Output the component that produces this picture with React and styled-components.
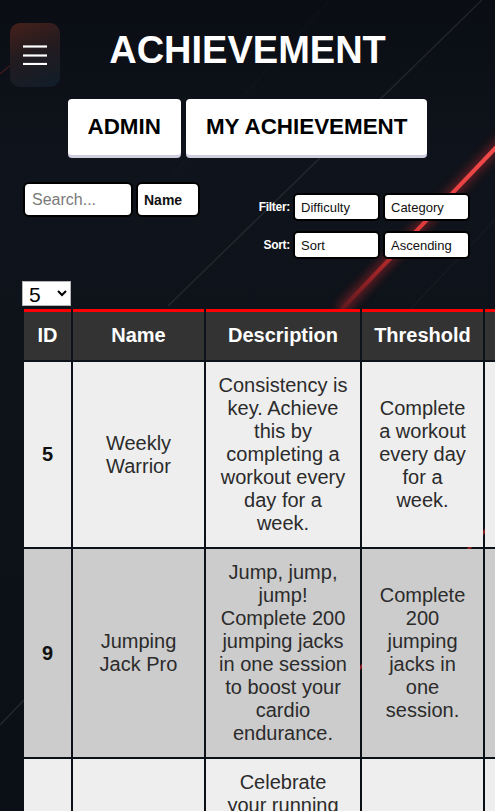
import React from 'react';
import styled, { createGlobalStyle } from 'styled-components';

const GlobalStyle = createGlobalStyle`
  html, body {
    margin: 0;
    padding: 0;
    background: #0b0f16;
    overflow-x: hidden;
    font-family: "Liberation Sans", Arial, sans-serif;
  }
`;

const Page = styled.div`
  position: relative;
  min-height: 100vh;
  overflow: hidden;
  padding-bottom: 40px;
`;

const Backdrop = styled.svg`
  position: absolute;
  top: 0;
  left: 0;
  width: 100%;
  height: 811px;
  z-index: 0;
  pointer-events: none;
`;

const Content = styled.div`
  position: relative;
  z-index: 1;
`;

const MenuToggle = styled.button`
  position: absolute;
  top: 23px;
  left: 10px;
  width: 50px;
  height: 64px;
  border: none;
  border-radius: 10px;
  background: linear-gradient(160deg, #45201a 0%, #231b1f 45%, #101d2a 100%);
  display: flex;
  align-items: center;
  justify-content: center;
  padding: 0;
  cursor: pointer;
  z-index: 2;
`;

const Title = styled.h1`
  margin: 29px 0 0;
  text-align: center;
  color: #ffffff;
  font-size: 38px;
  font-weight: 700;
`;

const TabRow = styled.div`
  display: flex;
  justify-content: center;
  gap: 5px;
  margin-top: 27px;
`;

const TabButton = styled.button`
  height: 56px;
  padding: 0 20px;
  background: #ffffff;
  color: #000000;
  border: none;
  border-radius: 4px;
  box-shadow: 0 3px 0 #cfcde0;
  font-family: "Liberation Sans", Arial, sans-serif;
  font-size: 22.4px;
  font-weight: 700;
  cursor: pointer;
`;

const Controls = styled.div`
  display: flex;
  justify-content: space-between;
  align-items: flex-start;
  padding: 0 25px 0 23px;
  margin-top: 27px;
`;

const SearchGroup = styled.div`
  display: flex;
  gap: 3px;
`;

const SearchInput = styled.input`
  box-sizing: border-box;
  width: 110px;
  height: 35px;
  border: 2px solid #000;
  border-radius: 6px;
  padding: 0 7px;
  font-family: "Liberation Sans", Arial, sans-serif;
  font-size: 16px;
  color: #222;
  background: #fff;
  outline: none;

  &::placeholder {
    color: #7a7a7a;
  }
`;

const FieldButton = styled.button`
  box-sizing: border-box;
  width: 64px;
  height: 35px;
  border: 2px solid #000;
  border-radius: 6px;
  background: #fff;
  padding: 0 0 0 6px;
  text-align: left;
  font-family: "Liberation Sans", Arial, sans-serif;
  font-size: 14px;
  font-weight: 700;
  color: #111;
`;

const FilterGroup = styled.div`
  display: grid;
  grid-template-columns: auto 87px 87px;
  column-gap: 3px;
  row-gap: 10px;
  align-items: center;
  margin-top: 11px;
`;

const FilterLabel = styled.span`
  color: #ffffff;
  font-size: 12px;
  font-weight: 700;
  text-align: right;
  letter-spacing: -0.3px;
`;

const FilterBox = styled.button`
  box-sizing: border-box;
  height: 28px;
  border: 2px solid #000;
  border-radius: 5px;
  background: #fff;
  padding: 0 0 0 6px;
  text-align: left;
  font-family: "Liberation Sans", Arial, sans-serif;
  font-size: 13px;
  color: #111;
`;

const PageSizeRow = styled.div`
  padding-left: 22px;
  margin-top: 22px;
  height: 26px;
`;

const PageSizeSelect = styled.select`
  width: 49px;
  height: 25px;
  font-family: "Liberation Sans", Arial, sans-serif;
  font-size: 21px;
  border: 1px solid #b5b5b5;
  border-radius: 0;
  background: #fff;
  color: #000;
  padding: 0 2px;
`;

const Table = styled.table`
  margin-left: 22px;
  border-collapse: separate;
  border-spacing: 2px;
  table-layout: fixed;
`;

const HeadCell = styled.th`
  box-sizing: border-box;
  width: ${(p) => p.$w}px;
  background: #333333;
  color: #ffffff;
  border-top: 3px solid #ff0000;
  padding: 12px 4px 13px;
  font-size: 20px;
  font-weight: 700;
  text-align: center;
`;

const Row = styled.tr`
  background: ${(p) => (p.$alt ? '#cccccc' : '#eeeeee')};
`;

const Cell = styled.td`
  box-sizing: border-box;
  padding: 12px;
  font-size: 20px;
  color: ${(p) => (p.$bold ? '#111111' : '#2b2b2b')};
  text-align: center;
  vertical-align: middle;
  font-weight: ${(p) => (p.$bold ? 700 : 400)};
`;

const columns = [
  { key: 'id', label: 'ID', w: 47 },
  { key: 'name', label: 'Name', w: 131 },
  { key: 'description', label: 'Description', w: 154 },
  { key: 'threshold', label: 'Threshold', w: 121 },
  { key: 'difficulty', label: 'Difficulty', w: 120 },
  { key: 'category', label: 'Category', w: 130 },
  { key: 'points', label: 'Points', w: 100 },
];

const tableWidth = columns.reduce((sum, c) => sum + c.w, 0) + (columns.length + 1) * 2;

const achievements = [
  {
    id: 5,
    name: 'Weekly Warrior',
    description: 'Consistency is key. Achieve this by completing a workout every day for a week.',
    threshold: 'Complete a workout every day for a week.',
    difficulty: 'Medium',
    category: 'Consistency',
    points: 50,
  },
  {
    id: 9,
    name: 'Jumping Jack Pro',
    description: 'Jump, jump, jump! Complete 200 jumping jacks in one session to boost your cardio endurance.',
    threshold: 'Complete 200 jumping jacks in one session.',
    difficulty: 'Easy',
    category: 'Cardio',
    points: 30,
  },
  {
    id: 12,
    name: 'Marathon Master',
    description: 'Celebrate your running journey by completing a full marathon distance in total runs.',
    threshold: 'Run a total of 42 km.',
    difficulty: 'Hard',
    category: 'Running',
    points: 100,
  },
  {
    id: 14,
    name: 'Early Bird',
    description: 'Start your day right by working out before 7 AM five times.',
    threshold: 'Work out before 7 AM five times.',
    difficulty: 'Medium',
    category: 'Habits',
    points: 40,
  },
];

const MenuIcon = () => (
  <svg width="24" height="20" viewBox="0 0 24 20">
    <g stroke="#ffffff" strokeWidth="2.2">
      <line x1="0" y1="1.5" x2="24" y2="1.5" />
      <line x1="0" y1="10.5" x2="24" y2="10.5" />
      <line x1="0" y1="19" x2="24" y2="19" />
    </g>
  </svg>
);

const BackgroundArt = () => (
  <Backdrop viewBox="0 0 495 811" preserveAspectRatio="none">
    <defs>
      <linearGradient id="bg" x1="0" y1="0" x2="0" y2="1">
        <stop offset="0" stopColor="#0a0d14" />
        <stop offset="0.2" stopColor="#0f131b" />
        <stop offset="1" stopColor="#0b0f16" />
      </linearGradient>
      <linearGradient id="streak" x1="505" y1="138" x2="340" y2="311" gradientUnits="userSpaceOnUse">
        <stop offset="0" stopColor="#ff5050" stopOpacity="0.95" />
        <stop offset="0.55" stopColor="#ff4040" stopOpacity="0.8" />
        <stop offset="1" stopColor="#ff2020" stopOpacity="0.1" />
      </linearGradient>
      <filter id="glow" x="-20%" y="-20%" width="140%" height="140%">
        <feGaussianBlur stdDeviation="4" />
      </filter>
    </defs>
    <rect width="495" height="811" fill="url(#bg)" />
    <line x1="482" y1="0" x2="168" y2="306" stroke="rgba(255,255,255,0.09)" strokeWidth="1.5" />
    <line x1="330" y1="0" x2="150" y2="200" stroke="rgba(255,255,255,0.03)" strokeWidth="1" />
    <line x1="495" y1="220" x2="400" y2="320" stroke="rgba(255,255,255,0.05)" strokeWidth="1" />
    <line x1="0" y1="74" x2="24" y2="54" stroke="rgba(200,60,60,0.25)" strokeWidth="1.5" />
    <line x1="0" y1="725" x2="24" y2="700" stroke="rgba(255,255,255,0.1)" strokeWidth="1.5" />
    <line x1="505" y1="138" x2="340" y2="311" stroke="#ff3030" strokeWidth="12" opacity="0.3" filter="url(#glow)" />
    <line x1="505" y1="138" x2="340" y2="311" stroke="url(#streak)" strokeWidth="4" />
    <line x1="495" y1="520" x2="340" y2="690" stroke="#ff2a2a" strokeWidth="3" opacity="0.5" />
  </Backdrop>
);

const App = () => {
  return (
    <Page>
      <GlobalStyle />
      <BackgroundArt />
      <MenuToggle aria-label="Menu">
        <MenuIcon />
      </MenuToggle>
      <Content>
        <Title>ACHIEVEMENT</Title>
        <TabRow>
          <TabButton>ADMIN</TabButton>
          <TabButton>MY ACHIEVEMENT</TabButton>
        </TabRow>

        <Controls>
          <SearchGroup>
            <SearchInput placeholder="Search..." />
            <FieldButton>Name</FieldButton>
          </SearchGroup>
          <FilterGroup>
            <FilterLabel>Filter:</FilterLabel>
            <FilterBox>Difficulty</FilterBox>
            <FilterBox>Category</FilterBox>
            <FilterLabel>Sort:</FilterLabel>
            <FilterBox>Sort</FilterBox>
            <FilterBox>Ascending</FilterBox>
          </FilterGroup>
        </Controls>

        <PageSizeRow>
          <PageSizeSelect defaultValue="5">
            <option value="5">5</option>
            <option value="10">10</option>
            <option value="20">20</option>
          </PageSizeSelect>
        </PageSizeRow>

        <Table style={{ width: tableWidth }}>
          <thead>
            <tr>
              {columns.map((c) => (
                <HeadCell key={c.key} $w={c.w}>{c.label}</HeadCell>
              ))}
            </tr>
          </thead>
          <tbody>
            {achievements.map((a, i) => (
              <Row key={a.id} $alt={i % 2 === 1}>
                <Cell $bold>{a.id}</Cell>
                <Cell>{a.name}</Cell>
                <Cell>{a.description}</Cell>
                <Cell>{a.threshold}</Cell>
                <Cell>{a.difficulty}</Cell>
                <Cell>{a.category}</Cell>
                <Cell>{a.points}</Cell>
              </Row>
            ))}
          </tbody>
        </Table>
      </Content>
    </Page>
  );
};

export default App;
